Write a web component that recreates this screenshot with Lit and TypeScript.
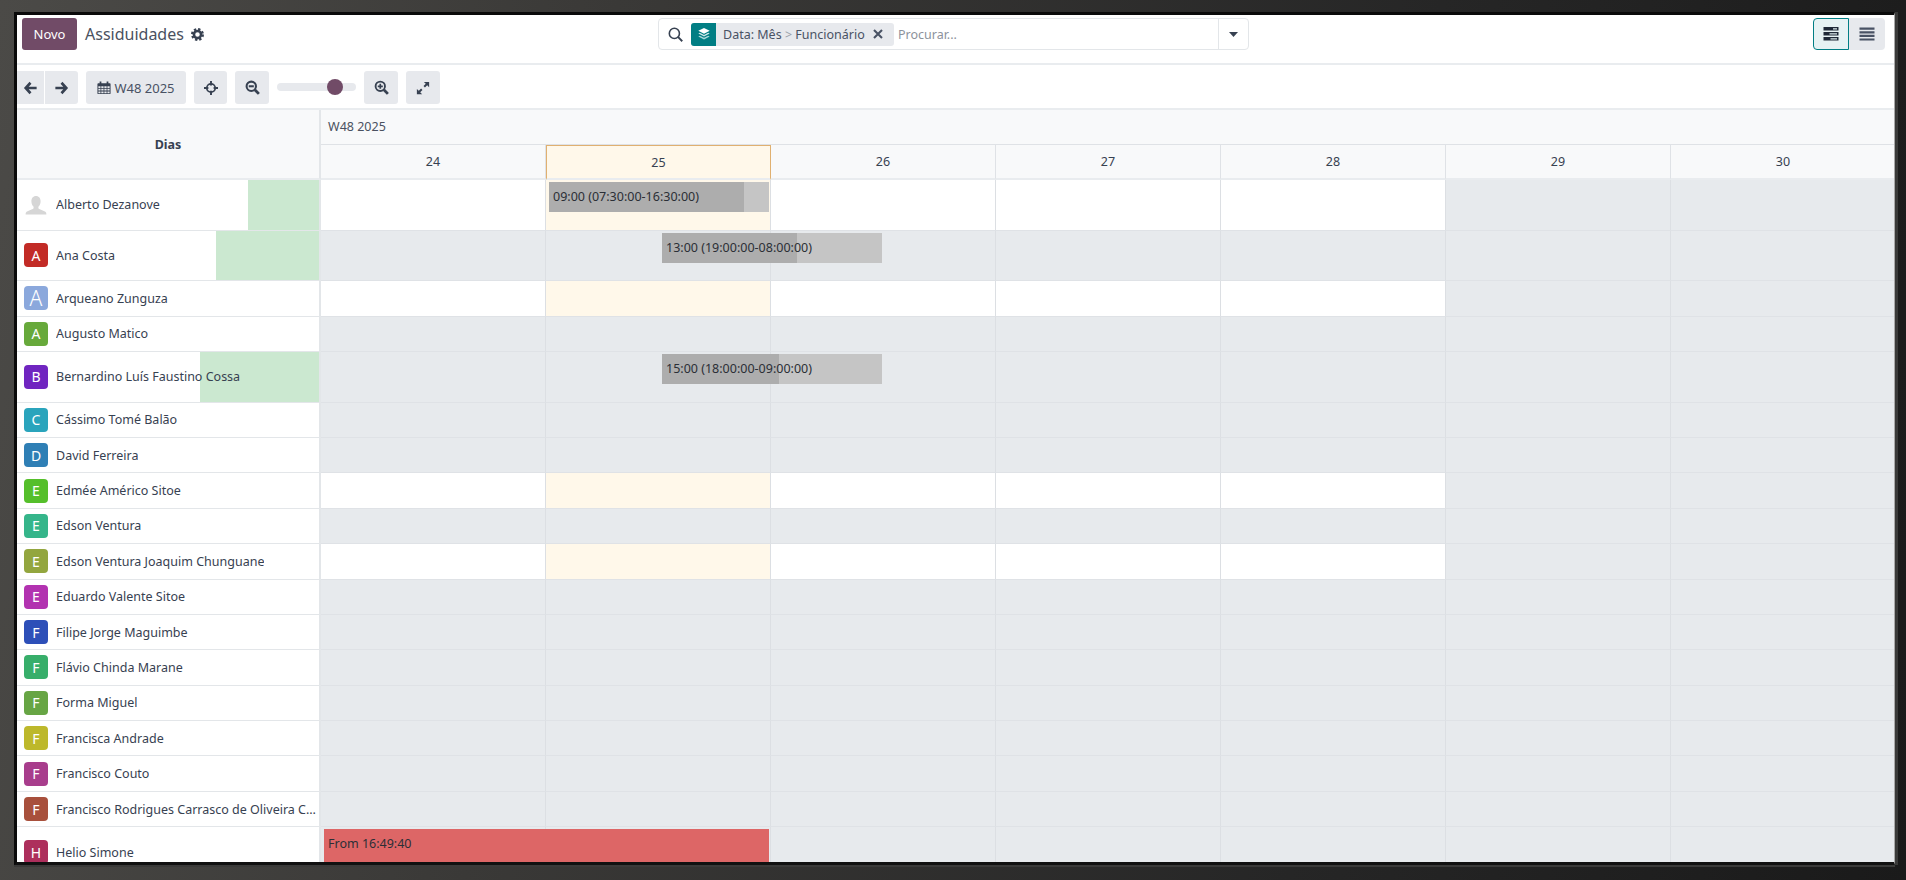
import { LitElement, html, css, svg } from "lit";
import { customElement } from "lit/decorators.js";

type Row = {
  name: string; letter?: string; color?: string; tall?: boolean;
  open?: boolean; today?: boolean; green?: number; big?: boolean; avatar?: boolean;
  pill?: { text: string; left: number; width: number; dark: number; red?: boolean };
};

const ROWS: Row[] = [
  { name: "Alberto Dezanove", avatar: true, tall: true, open: true, today: true, green: 71, pill: { text: "09:00 (07:30:00-16:30:00)", left: 228, width: 220, dark: 195 } },
  { name: "Ana Costa", letter: "A", color: "#c22b26", tall: true, green: 103, pill: { text: "13:00 (19:00:00-08:00:00)", left: 341, width: 220, dark: 135 } },
  { name: "Arqueano Zunguza", letter: "A", color: "#8ba8dc", open: true, today: true, big: true },
  { name: "Augusto Matico", letter: "A", color: "#67a93b" },
  { name: "Bernardino Luís Faustino Cossa", letter: "B", color: "#7025c0", tall: true, green: 119, pill: { text: "15:00 (18:00:00-09:00:00)", left: 341, width: 220, dark: 117 } },
  { name: "Cássimo Tomé Balão", letter: "C", color: "#2aa4bc" },
  { name: "David Ferreira", letter: "D", color: "#2f7fb5" },
  { name: "Edmée Américo Sitoe", letter: "E", color: "#55bf2b", open: true, today: true },
  { name: "Edson Ventura", letter: "E", color: "#35b58a" },
  { name: "Edson Ventura Joaquim Chunguane", letter: "E", color: "#93a63f", open: true, today: true },
  { name: "Eduardo Valente Sitoe", letter: "E", color: "#b232b0" },
  { name: "Filipe Jorge Maguimbe", letter: "F", color: "#2d4fb8" },
  { name: "Flávio Chinda Marane", letter: "F", color: "#37ae6a" },
  { name: "Forma Miguel", letter: "F", color: "#67a544" },
  { name: "Francisca Andrade", letter: "F", color: "#bdb82b" },
  { name: "Francisco Couto", letter: "F", color: "#a83d8c" },
  { name: "Francisco Rodrigues Carrasco de Oliveira Cardoso", letter: "F", color: "#a8503c" },
  { name: "Helio Simone", letter: "H", color: "#ad2f5c", tall: true, pill: { text: "From 16:49:40", left: 3, width: 445, dark: 445, red: true } },
];

const DAYS = [24, 25, 26, 27, 28, 29, 30];

const icon = (w: number, h: number, body: unknown, vb = "0 0 16 16") =>
  html`<svg width=${w} height=${h} viewBox=${vb} aria-hidden="true">${body}</svg>`;

const ICONS = {
  left: icon(15, 14, svg`<path d="M8 2 2.5 8 8 14M3 8h12" fill="none" stroke="currentColor" stroke-width="3"/>`),
  right: icon(15, 14, svg`<path d="M8 2l5.5 6L8 14M13 8H1" fill="none" stroke="currentColor" stroke-width="3"/>`),
  calendar: icon(14, 15, svg`<path fill="currentColor" fill-rule="evenodd" d="M1.5 3H3V1h2v2h6V1h2v2h1.5a1 1 0 0 1 1 1v10.5a1 1 0 0 1-1 1h-13a1 1 0 0 1-1-1V4a1 1 0 0 1 1-1zM1.6 6.5v2h2.4v-2zm3.3 0v2h2.6v-2zm3.5 0v2h2.6v-2zm3.5 0v2h2.5v-2zm-10.3 3v2h2.4v-2zm3.3 0v2h2.6v-2zm3.5 0v2h2.6v-2zm3.5 0v2h2.5v-2zm-10.3 3v2h2.4v-2zm3.3 0v2h2.6v-2zm3.5 0v2h2.6v-2zm3.5 0v2h2.5v-2z"/>`),
  target: icon(14, 14, svg`<g fill="none" stroke="currentColor"><circle cx="8" cy="8" r="4.8" stroke-width="2"/><path d="M8 0v5M8 11v5M0 8h5M11 8h5" stroke-width="2.2"/></g>`),
  zoomOut: icon(15, 15, svg`<g fill="none" stroke="currentColor" stroke-width="2.2"><circle cx="6.7" cy="6.7" r="5"/><path d="M4 6.7h5.4"/><path d="M10.5 10.5l4.3 4.3" stroke-width="3"/></g>`),
  zoomIn: icon(15, 15, svg`<g fill="none" stroke="currentColor" stroke-width="2"><circle cx="6.7" cy="6.7" r="5"/><path d="M4 6.7h5.4M6.7 4v5.4" stroke-width="1.8"/><path d="M10.5 10.5l4.3 4.3" stroke-width="3"/></g>`),
  expand: icon(14, 14, svg`<path fill="currentColor" d="M9 1h6v6l-2.2-2.2-2.6 2.6-1.6-1.6 2.6-2.6zM7 15H1V9l2.2 2.2 2.6-2.6 1.6 1.6-2.6 2.6z"/>`),
  cog: icon(13, 13, svg`<g fill="none" stroke="currentColor"><circle cx="8" cy="8" r="4.4" stroke-width="3.2"/><circle cx="8" cy="8" r="6.6" stroke-width="2.8" stroke-dasharray="2.8 2.38"/></g>`),
  search: icon(15, 15, svg`<g fill="none" stroke="currentColor" stroke-width="1.7"><circle cx="6.8" cy="6.8" r="5.4"/><path d="M10.6 10.6l4.6 4.6" stroke-width="2"/></g>`),
  layers: icon(14, 14, svg`<path fill="#fff" d="M8 1l6.5 3.4L8 7.8 1.5 4.4z"/><path fill="#cfe8e9" d="M1.5 7.5l1.7-.9L8 9.1l4.8-2.5 1.7.9L8 10.9z"/><path fill="#a9d8da" d="M1.5 10.8l1.7-.9L8 12.4l4.8-2.5 1.7.9L8 14.2z"/>`),
  close: icon(12, 12, svg`<path d="M2 2l8 8M10 2l-8 8" fill="none" stroke="currentColor" stroke-width="2.1"/>`, "0 0 12 12"),
  caret: icon(9, 5, svg`<path d="M0 0h9L4.5 5z" fill="currentColor"/>`, "0 0 9 5"),
  gantt: icon(16, 14, svg`<path fill="#1f2937" d="M0 0h15v3.6H0zM0 5h15v3.6H0zM0 10h15v3.6H0z"/><path fill="#d8e6e8" d="M9.5 1.2h4v1.2h-4zM6 6.2h7.5v1.2H6zM7 11.2h6.5v1.2H7z"/>`, "0 0 15 14"),
  bars: icon(16, 14, svg`<path fill="#495264" d="M0 .5h15v2.2H0zM0 4.2h15v2.2H0zM0 7.8h15v2.2H0zM0 11.4h15v2.2H0z"/>`, "0 0 15 14"),
  person: html`<svg class="person" width="24" height="24" viewBox="0 0 24 24" aria-hidden="true"><path fill="#d6d6d6" d="M12 3c3 0 4.6 2.300 4.600 5.200 0 2.400-.9 4.400-2.200 5.600v1.500c0 1 4.600 1.800 7 3.500.7.500 1 1.400 1 2.700H1.600c0-1.300.3-2.200 1-2.700 2.400-1.700 7-2.500 7-3.500v-1.500C8.300 12.600 7.400 10.600 7.400 8.200 7.400 5.300 9 3 12 3z"/></svg>`,
};

@customElement("app-root")
export class AppRoot extends LitElement {
  static styles = css`
    :host { display: block; width: 1906px; height: 880px; overflow: hidden; font-family: "Noto Sans", "Open Sans", sans-serif; font-size: 12.5px; color: #374151; }
    .frame { box-sizing: border-box; width: 1906px; height: 880px; padding: 12px 11px 15px 14px; background: linear-gradient(100deg, #4b4a47 0%, #3a3937 30%, #262626 70%, #1a1a1a 100%); }
    .window { box-sizing: border-box; width: 100%; height: 100%; background: #fff; overflow: hidden; display: flex; flex-direction: column; border-style: solid; border-width: 3px 1px 3px 3px; border-color: #0a0a0a #a9a9a9 #111 #0a0a0a; box-shadow: 3px 0 0 #3a3a39, 0 2px 0 #3a3a39; }

    .top { flex: none; height: 50px; box-sizing: border-box; border-bottom: 2px solid #e9ecef; display: grid; grid-template-columns: 1fr 591px 1fr; padding: 3px 9px 0 5px; }
    .top-left { display: flex; align-items: flex-start; }
    .novo { width: 55px; height: 32px; box-sizing: border-box; background: #714b67; color: #fff; border-radius: 3px; display: flex; align-items: center; justify-content: center; font-size: 13px; }
    .title { margin: 5px 0 0 8px; font-size: 16px; line-height: 22px; color: #4a5160; display: flex; align-items: center; gap: 7px; }
    .title svg { color: #374151; }
    .search { box-sizing: border-box; height: 32px; border: 1px solid #e3e6e9; border-radius: 4px; display: flex; align-items: center; color: #374151; }
    .search > svg { margin-left: 9px; margin-right: 8px; flex: none; }
    .facet { display: flex; align-items: stretch; height: 23px; width: 203px; background: #e7e9ed; border-radius: 3px; overflow: hidden; flex: none; font-size: 12.5px; color: #495264; }
    .facet-icon { width: 25px; background: #017e84; display: flex; align-items: center; justify-content: center; }
    .facet-text { margin-left: 7px; line-height: 23px; white-space: nowrap; flex: 1; }
    .facet-text i { font-style: normal; color: #9aa0aa; }
    .facet-x { width: 22px; display: flex; align-items: center; color: #495264; }
    .placeholder { margin-left: 4px; color: #8c929c; flex: 1; font-size: 12.5px; }
    .caret { width: 29px; height: 100%; border-left: 1px solid #e3e6e9; display: flex; align-items: center; justify-content: center; }
    .switch { display: flex; justify-content: flex-end; }
    .sw { width: 36px; height: 32px; box-sizing: border-box; display: flex; align-items: center; justify-content: center; background: #e7e9ed; }
    .sw.active { width: 36px; background: #e6f2f3; border: 1px solid #017e84; border-radius: 4px 0 0 4px; }
    .sw.last { border-radius: 0 4px 4px 0; }

    .tools { flex: none; height: 45px; box-sizing: border-box; border-bottom: 2px solid #e9ecef; display: flex; align-items: flex-start; padding-top: 6px; color: #374151; }
    .btn { height: 33px; box-sizing: border-box; background: #e7e9ed; border-radius: 3px; display: flex; align-items: center; justify-content: center; flex: none; margin-right: 8px; font-size: 13px; color: #495264; gap: 3px; }
    .btn svg { color: #374151; }
    .btn.l { width: 27px; margin-right: 1px; border-radius: 0; padding-left: 0; }
    .btn.r { width: 33px; border-radius: 0 3px 3px 0; }
    .btn.w33 { width: 33px; }
    .btn.w34 { width: 34px; }
    .btn.cal { width: 100px; }
    .slider { width: 79px; height: 8px; margin: 12px 8px 0 0; background: #e7e9ed; border-radius: 4px; position: relative; flex: none; }
    .thumb { position: absolute; left: 50px; top: -4px; width: 16px; height: 16px; border-radius: 50%; background: #714b67; }

    .grid { flex: 1; min-height: 0; overflow: hidden; }
    .rowline { display: grid; grid-template-columns: 304px repeat(7, 225px); position: relative; }
    .head-side { grid-row: 1 / span 2; background: #f8f9fa; border-right: 2px solid #e3e6e9; border-bottom: 2px solid #e9ecef; display: flex; align-items: center; justify-content: center; font-weight: 700; color: #374151; font-size: 12.5px; box-sizing: border-box; }
    .head-week { grid-column: 2 / span 7; height: 35px; box-sizing: border-box; background: #f8f9fa; border-bottom: 1px solid #dfe2e6; padding-left: 7px; line-height: 34px; color: #4a5160; font-size: 12.5px; }
    .head-day { height: 35px; box-sizing: border-box; background: #f8f9fa; border-right: 1px solid #dfe2e6; border-bottom: 2px solid #e9ecef; display: flex; align-items: center; justify-content: center; font-size: 12.5px; color: #374151; }
    .head-day.today { background: #fff8ea; border-top: 1px solid #e0b070; border-left: 1px solid #e0b070; border-right: 1px solid #e0b070; }

    .row { height: 35.4px; box-sizing: border-box; }
    .row.tall { height: 50.6px; }
    .side { position: relative; box-sizing: border-box; border-right: 2px solid #e3e6e9; border-bottom: 1.5px solid #e3e6e9; display: flex; align-items: center; padding-left: 7px; overflow: hidden; background: #fff; }
    .green { position: absolute; top: 0; right: 0; bottom: 0; background: #cbe8d0; }
    .ava { position: relative; width: 24px; height: 24px; border-radius: 4px; color: #fff; display: flex; align-items: center; justify-content: center; font-size: 14px; flex: none; margin-right: 8px; }
    .ava.big { font-size: 21px; font-weight: 300; }
    .person { flex: none; margin-right: 8px; position: relative; }
    .name { position: relative; white-space: nowrap; overflow: hidden; text-overflow: ellipsis; color: #374151; font-size: 12.5px; }
    .cell { box-sizing: border-box; border-right: 1px solid #dcdfe3; border-bottom: 1.5px solid #dfe2e6; background: #e7eaed; }
    .cell.open { background: #fff; }
    .cell.today { background: #fff8ea; }
    .pill { position: absolute; top: 2px; height: 30px; background: #c5c5c5; overflow: hidden; color: #2b2f36; font-size: 12.5px; line-height: 30px; }
    .pill.red { background: #dd6666; top: 2px; height: 40px; }
    .fill { position: absolute; left: 0; top: 0; bottom: 0; background: #adadad; }
    .pill span { position: relative; padding-left: 4px; white-space: nowrap; }
  `;

  private cell(r: Row, i: number) {
    const open = r.open && i < 5;
    const today = r.today && i === 1;
    return html`<div class="cell ${open ? "open" : ""} ${today ? "today" : ""}"></div>`;
  }

  private row(r: Row) {
    return html`<div class="rowline row ${r.tall ? "tall" : ""}">
      <div class="side">
        ${r.green ? html`<div class="green" style="width:${r.green}px"></div>` : ""}
        ${r.avatar ? ICONS.person : html`<div class="ava ${r.big ? "big" : ""}" style="background:${r.color}">${r.letter}</div>`}
        <div class="name">${r.name}</div>
      </div>
      ${DAYS.map((_, i) => this.cell(r, i))}
      ${r.pill
        ? html`<div class="pill ${r.pill.red ? "red" : ""}" style="left:${304 + r.pill.left}px;width:${r.pill.width}px">
            <div class="fill" style="width:${r.pill.red ? 0 : r.pill.dark}px"></div>
            <span>${r.pill.text}</span>
          </div>`
        : ""}
    </div>`;
  }

  render() {
    return html`<div class="frame"><div class="window">
      <div class="top">
        <div class="top-left">
          <div class="novo">Novo</div>
          <div class="title">Assiduidades ${ICONS.cog}</div>
        </div>
        <div class="search">
          ${ICONS.search}
          <div class="facet">
            <div class="facet-icon">${ICONS.layers}</div>
            <div class="facet-text">Data: Mês <i>&gt;</i> Funcionário</div>
            <div class="facet-x">${ICONS.close}</div>
          </div>
          <div class="placeholder">Procurar...</div>
          <div class="caret">${ICONS.caret}</div>
        </div>
        <div class="switch">
          <div class="sw active">${ICONS.gantt}</div>
          <div class="sw last">${ICONS.bars}</div>
        </div>
      </div>
      <div class="tools">
        <div class="btn l">${ICONS.left}</div>
        <div class="btn r">${ICONS.right}</div>
        <div class="btn cal">${ICONS.calendar}<span>W48 2025</span></div>
        <div class="btn w33">${ICONS.target}</div>
        <div class="btn w34">${ICONS.zoomOut}</div>
        <div class="slider"><div class="thumb"></div></div>
        <div class="btn w34">${ICONS.zoomIn}</div>
        <div class="btn w34">${ICONS.expand}</div>
      </div>
      <div class="grid">
        <div class="rowline">
          <div class="head-side">Dias</div>
          <div class="head-week">W48 2025</div>
          ${DAYS.map((d, i) => html`<div class="head-day ${i === 1 ? "today" : ""}">${d}</div>`)}
        </div>
        ${ROWS.map((r) => this.row(r))}
      </div>
    </div></div>`;
  }
}
